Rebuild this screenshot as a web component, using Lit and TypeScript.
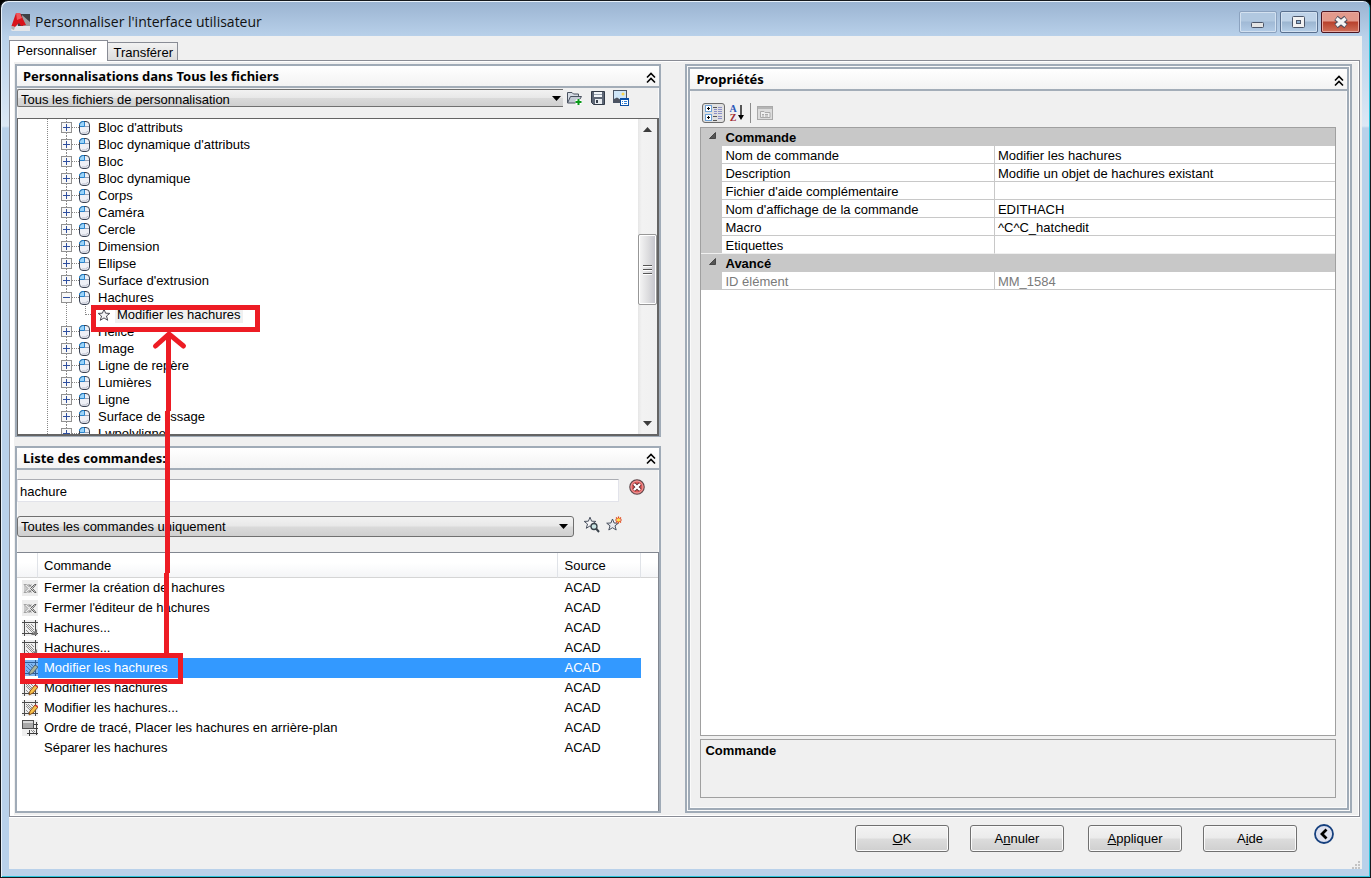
import { LitElement, html, css, svg, nothing } from "lit";
import { customElement, property } from "lit/decorators.js";

const icon = (w: number, h: number, body: unknown, cls = "") =>
  html`<svg class=${cls} width=${w} height=${h} viewBox="0 0 ${w} ${h}" aria-hidden="true">${body}</svg>`;

const mouseIcon = icon(12, 16, svg`
  <rect x="0.5" y="1.5" width="10" height="13" rx="3.500" fill="#eef0f6" stroke="#3c4454"/>
  <path d="M1 6.500V5Q1.500 2 5 2V6.500Z" fill="#9ad4fa"/>
  <path d="M5.500 2V6.500H10" stroke="#9aa2b4" fill="none"/>
  <path d="M5.500 2V6.500H1" stroke="#2a84cc" fill="none"/>
  <path d="M0.500 5Q0.500 1.500 5 1.500" stroke="#1684d8" fill="none"/>
  <path d="M3 13Q7 14 9 11" stroke="#b9bccb" fill="none"/>`);

const starPath = "M7 1.200L8.600 5.200L12.800 5.400L9.500 8L10.700 12.300L7 9.900L3.300 12.300L4.500 8L1.200 5.400L5.400 5.200Z";
const starIcon = icon(14, 14, svg`<path d=${starPath} fill="#f3f3f6" stroke="#4a4a55"/>`);

const closeHatch = icon(16, 16, svg`
  <rect width="16" height="16" fill="#ededed"/>
  <path d="M2 4.500H4.500L7.500 7L9.500 4.500M2 12.500H4.500L7.500 10L9.500 12.500M2 4.500L6 8.500L2 12.500" fill="#c9c9c9" stroke="#a2a2a2"/>
  <path d="M14 4.500H12.500L8.500 8.500L12.500 12.500H14M7 4.500L9 6.500M7 12.500L9 10.500M14 4.500L10.500 8.500L14 12.500" stroke="#606060" fill="none"/>`);

const hatchBase = svg`
  <rect width="16" height="16" fill="#efefef"/>
  <path d="M4 6L11 13M4 10L7 13M6 4L12 10M9 4L12 7M4 4L12 12" stroke="#8d8d8d" fill="none"/>
  <path d="M2.500 0V16M13.500 0V16M0 2.500H16M0 13.500H16" stroke="#4b4b4b" fill="none"/>`;
const hatchIcon = icon(16, 16, svg`${hatchBase}<path d="M15 9V15H9Z" fill="#777"/>`);
const hatchEdit = icon(16, 16, svg`${hatchBase}
  <path d="M7 15L8 11L13 5L16 7L11 13Z" fill="#f7c04a" stroke="#8a4f14"/>
  <path d="M13 5L16 7" stroke="#c33" stroke-width="1.500"/>`);
const hatchEditSel = icon(16, 16, svg`
  <rect width="16" height="16" fill="#7fb7f2"/>
  <path d="M4 6L11 13M4 10L7 13M6 4L12 10M9 4L12 7" stroke="#4a7cb4" fill="none"/>
  <path d="M2.500 0V16M13.500 0V16M0 2.500H16M0 13.500H16" stroke="#2c5e98" fill="none"/>
  <path d="M7 15L8 11L13 5L16 7L11 13Z" fill="#a8b49a" stroke="#46607a"/>`);
const orderIcon = icon(16, 16, svg`
  <rect width="16" height="16" fill="#efefef"/>
  <rect x="0.500" y="0.500" width="11" height="8" fill="#a8a8a8" stroke="#505050"/>
  <path d="M1 2H11" stroke="#d8d8d8" stroke-width="2"/>
  <path d="M14.500 2V15M12 4.500H16M5 13.500H16M7.500 10V16M12 8.500H16" stroke="#3d3d3d" fill="none"/>
  <path d="M9 10L12 13M11 10L13 12" stroke="#888"/>`);

const chevrons = icon(10, 12, svg`
  <path d="M1 5.500L5 1.500L9 5.500M1 10.500L5 6.500L9 10.500" fill="none" stroke="#000" stroke-width="1.600"/>`);

const openIcon = icon(17, 16, svg`
  <path d="M1.500 13V2.500H6L7.500 4H12.500V6" fill="#d5dbe3" stroke="#4a5260"/>
  <path d="M1.500 13L4.500 6.500H15.500L11.500 13Z" fill="#c3cad4" stroke="#4a5260"/>
  <path d="M12.500 9V15M9.500 12H15.500" stroke="#fff" stroke-width="4"/>
  <path d="M12.500 9V15M9.500 12H15.500" stroke="#0b9a1a" stroke-width="2"/>`);
const saveIcon = icon(16, 16, svg`
  <path d="M1.500 1.500H14.500V14.500H3.500L1.500 12.500Z" fill="#5d6675" stroke="#333b48"/>
  <rect x="4" y="2" width="8" height="5" fill="#f2f5f8"/><path d="M4 4.500H12" stroke="#9aa4b0"/>
  <rect x="5" y="9" width="7" height="5" fill="#e8ecf0"/><rect x="6" y="10" width="2" height="3" fill="#39414d"/>`);
const imageIcon = icon(16, 16, svg`
  <rect x="0.500" y="0.500" width="13" height="12" fill="#cfe6f8" stroke="#4a5566"/>
  <circle cx="10" cy="4" r="1.500" fill="#fbd54a"/>
  <path d="M1 12V9L4 7.500L8 10V12Z" fill="#4d5360"/>
  <rect x="7.500" y="8.500" width="8" height="7" fill="#fff" stroke="#0b4fa5"/>
  <path d="M7 9H16" stroke="#0b4fa5" stroke-width="2"/>
  <path d="M9 11.500H10M11 11.500H14M9 13.500H10M11 13.500H14" stroke="#2d7fd8"/>`);

const clearIcon = icon(16, 16, svg`
  <circle cx="8" cy="8" r="7.200" fill="#e05a5a" stroke="#5e4a4e" stroke-width="1.200"/>
  <circle cx="8" cy="8" r="6" fill="none" stroke="#f0a0a0"/>
  <path d="M5 5L11 11M11 5L5 11" stroke="#5e2a2e" stroke-width="4"/>
  <path d="M5 5L11 11M11 5L5 11" stroke="#fff" stroke-width="2.400"/>`);
const findStar = icon(17, 17, svg`
  <path d=${starPath} fill="#f6f6f8" stroke="#4a5260"/>
  <circle cx="11" cy="10.500" r="3" fill="#c9e4e4" stroke="#39424a" stroke-width="1.300"/>
  <path d="M13 12.500L16 16" stroke="#39424a" stroke-width="2"/>`);
const newStar = icon(17, 17, svg`
  <path d="M6.500 3L8.100 7L12.300 7.200L9 9.800L10.200 14L6.500 11.700L2.800 14L4 9.800L0.700 7.200L4.900 7Z" fill="#e8eaee" stroke="#4a5260"/>
  <path d="M12.500 0.500V7.500M9 4H16M10 1.500L15 6.500M15 1.500L10 6.500" stroke="#e0481c" stroke-width="1.200"/>
  <circle cx="12.500" cy="4" r="1.700" fill="#ffe04a"/>`);

const categoryIcon = icon(20, 18, svg`
  <rect x="1.500" y="1.500" width="6" height="6" fill="#fff" stroke="#6fa3d8"/>
  <rect x="1.500" y="10.500" width="6" height="6" fill="#fff" stroke="#6fa3d8"/>
  <path d="M3 4.500H6M4.500 3V6M3 13.500H6M4.500 12V15" stroke="#000"/>
  <path d="M9 3.500H13M9 12.500H13M9 16.500H13" stroke="#555"/>
  <path d="M10 5.500H13M10 7.500H13M10 9.500H13M14 3.500H18M14 5.500H18M14 7.500H18M14 9.500H18M14 12.500H18M14 14.500H18" stroke="#8b8fc8"/>`);
const sortArrow = icon(6, 16, svg`<path d="M3 0V13" stroke="#000" stroke-width="1.300"/><path d="M0 10H6L3 15Z" fill="#000"/>`);
const pagesIcon = icon(16, 16, svg`
  <rect x="0.500" y="1.500" width="15" height="13" fill="#dcdcdc" stroke="#a9a9a9"/>
  <path d="M1 3H15" stroke="#b5b5b5" stroke-width="2"/>
  <path d="M3.500 12.500V6.500H7L8 7.500H13V12.500Z" fill="#efefef" stroke="#aaa"/>
  <path d="M5 9.500H7M5 11H7M8 9.500H11M8 11H11" stroke="#aaa"/>`);
const expandedMark = icon(7, 7, svg`<path d="M6.500 0.500V6.500H0.500Z" fill="#555" stroke="#333" stroke-width="0.800"/>`);

const logo = icon(20, 20, svg`
  <rect x="7" y="2" width="12" height="12" fill="#3d4045"/>
  <path d="M11 3L19 10V14H12Z" fill="#9b9da1"/>
  <path d="M0 18L2 14H19V19H1Z" fill="#e3e6ea"/>
  <path d="M0.500 14L5 1H9L15 13L10 14L8 11L4 15Z" fill="#d8131b"/>
  <path d="M5 1L9 1L11 6L6 8Z" fill="#f0555a"/>
  <path d="M0.500 14L4 15L3 18L0.500 17Z" fill="#b0aeb2"/>`);

const plusBox = (open: boolean) => icon(11, 11, svg`
  <rect x="0.500" y="0.500" width="10" height="10" fill="#f8f8f8" stroke="#919191"/>
  <path d="M2 5.500H9" stroke="#2f4f9f"/>
  ${open ? nothing : svg`<path d="M5.500 2V9" stroke="#2f4f9f"/>`}`);

@customElement("panel-header")
export class PanelHeader extends LitElement {
  @property() label = "";
  static styles = css`
    :host { display: flex; align-items: center; justify-content: space-between; box-sizing: border-box; height: 22px; flex: none;
      padding: 0 2px 0 6px; background: linear-gradient(#fff, #f3f3f3); border-bottom: 2px solid #a3adb8;
      font: bold 13px/20px "Noto Sans", sans-serif; color: #000; }
    h2 { margin: 0; font: inherit; }
    button { display: flex; margin: 3px 1px 0 0; padding: 0; border: 0; background: none; }
  `;
  render() {
    return html`<h2>${this.label}</h2><button aria-label="Réduire">${chevrons}</button>`;
  }
}

const TREE = ["Bloc d'attributs", "Bloc dynamique d'attributs", "Bloc", "Bloc dynamique", "Corps", "Caméra",
  "Cercle", "Dimension", "Ellipse", "Surface d'extrusion", "Hachures", "Hélice", "Image", "Ligne de repère",
  "Lumières", "Ligne", "Surface de lissage", "Lwpolyligne"];

const COMMANDS: [unknown, string][] = [
  [closeHatch, "Fermer la création de hachures"],
  [closeHatch, "Fermer l'éditeur de hachures"],
  [hatchIcon, "Hachures..."],
  [hatchIcon, "Hachures..."],
  [hatchEditSel, "Modifier les hachures"],
  [hatchEdit, "Modifier les hachures"],
  [hatchEdit, "Modifier les hachures..."],
  [orderIcon, "Ordre de tracé, Placer les hachures en arrière-plan"],
  [nothing, "Séparer les hachures"],
];
const SELECTED = 4;

const PROPS: [string, string][] = [
  ["Nom de commande", "Modifier les hachures"],
  ["Description", "Modifie un objet de hachures existant"],
  ["Fichier d'aide complémentaire", ""],
  ["Nom d'affichage de la commande", "EDITHACH"],
  ["Macro", "^C^C_hatchedit"],
  ["Etiquettes", ""],
];

@customElement("app-root")
export class AppRoot extends LitElement {
  static styles = css`
    :host { display: block; position: relative; height: 100vh; min-height: 600px; color: #000; background: #000;
      font: 13px/16px "Liberation Sans", Arial, sans-serif; }
    * { box-sizing: border-box; }
    svg { display: block; flex: none; }
    button, select, input { font: inherit; color: inherit; margin: 0; }
    .window { height: 100%; display: flex; flex-direction: column; padding: 0 8px 8px; border: 1px solid #15181d;
      border-radius: 8px 8px 0 0; background: linear-gradient(#9ab3d1, #b9d1ea 36px, #dce8f5 125px, #b9d1ea 127px);
      box-shadow: inset 1px 1px 0 #e8f1fa, inset -1px -1px 0 #2cc4dc; }
    .titlebar { display: flex; align-items: center; height: 35px; flex: none; padding: 6px 2px 0 2px; gap: 4px; }
    .titlebar h1 { flex: 1; margin: 0; font: 14px/20px "Open Sans", "Noto Sans", sans-serif; color: #111; }
    .controls { display: flex; gap: 3px; }
    .controls button { width: 38px; height: 22px; padding: 0; display: flex; align-items: center; justify-content: center;
      border: 1px solid #59708f; border-radius: 2px; box-shadow: inset 0 0 0 1px #d3e1f0;
      background: linear-gradient(#bfd3e8 45%, #9bb5d0 50%, #b6cfe8); }
    .controls .min { border-color: #8ba2bf; background: linear-gradient(#b1c8e0 45%, #a0b9d5 50%, #b3cce7); }
    .controls .close { width: 39px; border-color: #4c1520; box-shadow: inset 0 0 0 1px #e8a9a0;
      background: linear-gradient(#e39a8c 45%, #b8412c 50%, #d0705a); }
    .client { flex: 1; min-height: 0; display: flex; flex-direction: column; background: #f0f0f0; padding: 4px 2px 0 0; }
    .tabs { display: flex; align-items: flex-end; height: 20px; flex: none; }
    .tabs button { height: 18px; padding: 0 4px 0 6px; border: 1px solid #898c95; border-bottom: 0; border-left: 0;
      background: linear-gradient(#f2f2f2, #dcdcdc); line-height: 19px; }
    .tabs .on { height: 21px; margin-bottom: -1px; padding: 0 10px 0 7px; background: #fff; border-left: 1px solid #898c95;
      position: relative; line-height: 18px; }
    .page { flex: 1; min-height: 0; display: grid; grid-template-columns: minmax(0, 646fr) minmax(0, 666fr);
      gap: 24px; padding: 3px 7px 3px 5px; border: 1px solid #898c95; background: #f0f0f0;
      box-shadow: inset 4px 0 0 #fff, inset -1px -1px 0 #fff, inset 0 1px 0 #fff, 0 1px 0 #fff; }
    .left { display: flex; flex-direction: column; gap: 9px; min-height: 0; }
    .panel { display: flex; flex-direction: column; min-height: 0; border: 2px solid #a0abb7; background: #f0f0f0;
      box-shadow: inset 0 0 0 1px #fafafa; }
    .files { flex: 373 1 0; }
    .commands { flex: 367 1 0; }
    .filebar { display: flex; height: 30px; flex: none; gap: 7px; padding-top: 1px; }
    .filebar .icons { display: flex; width: 93px; gap: 7px; padding-top: 1px; margin-left: -4px; }
    .filebar select { flex: 1; }
    .filebar .combo { height: 18px; padding-top: 2px; border-right: 0; border-radius: 2px 0 0 2px; }
    .combo { flex: 1; display: block; min-width: 0; height: 21px; padding: 2px 20px 0 3px; appearance: none; border: 1px solid #707070;
      border-radius: 3px; line-height: 16px;
      background: url("data:image/svg+xml,%3Csvg xmlns='http://www.w3.org/2000/svg' width='9' height='5'%3E%3Cpath d='M0 0H9L4.500 5Z'/%3E%3C/svg%3E") no-repeat right 5px center,
        linear-gradient(#f2f2f2, #e8e8e8 48%, #dadada 52%, #cfcfcf); }
    .filebar .combo { background-position: right 2px top 6px, 0 0; }
    .icons button, .search button { display: flex; padding: 0; border: 0; background: none; }
    .treebox { flex: 1; min-height: 0; display: flex; overflow: hidden; background: #fff; border: 1px solid #646464;
      border-right-width: 2px; border-bottom-width: 2px; margin-bottom: -1px; }
    .tree { flex: 1; overflow: hidden; list-style: none; margin: 0; padding: 0 0 0 29px; }
    .tree ul { list-style: none; margin: 0; }
    .roots { border-left: 1px dotted #888; padding-left: 13px; }
    .branch { padding: 0; }
    .node { display: flex; align-items: center; height: 17px; white-space: nowrap; }
    .node .dots { width: 7px; border-top: 1px dotted #888; }
    .node .name { padding: 1px 3px 0 7px; }
    .trunk { background: linear-gradient(#888 50%, transparent 50%) 5px 0 / 1px 2px repeat-y; }
    .leaf { padding-left: 24px; }
    .leaf .elbow { width: 8px; height: 9px; border-left: 1px dotted #888; border-bottom: 1px dotted #888;
      align-self: flex-start; margin-right: 4px; }
    .node.leaf .name { background: #f0f0f0; padding: 0 2px; margin-left: 4px; }
    .scroll { display: flex; flex-direction: column; align-items: center; width: 19px; padding: 8px 0;
      background: linear-gradient(90deg, #e6e6e6, #f2f2f2 20%, #f0f0f0); }
    .before { flex: 99 1 0; }
    .after { flex: 112 1 0; }
    .thumb { width: 19px; height: 71px; display: flex; align-items: center; justify-content: center; border: 1px solid #979797;
      border-radius: 2px; box-shadow: inset 0 0 0 1px #fff; background: linear-gradient(90deg, #f6f6f6, #dcdcde 55%, #c4c4cc); }
    .search { display: flex; gap: 10px; flex: none; }
    .query { padding-top: 9px; height: 46px; }
    .query input { height: 23px; flex: 1; min-width: 0; padding: 4px 2px 2px; border: 1px solid #e2e3ea; border-top-color: #abadb3;
      background: #fff; }
    .query button { height: 16px; margin-right: 14px; }
    .scope { height: 36px; gap: 7px; }
    .scope .icons { display: flex; gap: 6px; padding-left: 2px; width: 78px; }
    .listbox { flex: 1; min-height: 0; overflow: hidden; background: #fff; border: 1px solid #828790; border-width: 1px 1px 0 0; }
    table { border-collapse: separate; border-spacing: 0; table-layout: fixed; width: 100%; }
    th, td { padding: 0; text-align: left; font-weight: normal; white-space: nowrap; overflow: hidden; }
    .list th { height: 25px; padding: 2px 0 0 6px; border-bottom: 1px solid #d5d5d5; border-right: 1px solid #e0e3e8;
      background: linear-gradient(#fff 40%, #f4f5f7); background-clip: padding-box; }
    .list th:last-child { border-right: 0; }
    .list td { height: 20px; padding-left: 6px; }
    .list td:first-child { padding-left: 5px; }
    .list tr.sel td:nth-child(2), .list tr.sel td:nth-child(3) { background: #3399ff; color: #fff; }
    .c-icon { width: 21px; }
    .c-src { width: 83px; }
    .c-end { width: 17px; }
    .outer { display: flex; min-height: 0; padding: 1px; border: 2px solid #a0abb7; background: #fafafa; }
    .props { flex: 1; min-width: 0; }
    .inside { flex: 1; min-height: 0; display: flex; flex-direction: column; padding: 11px 11px 10px 10px; }
    .tools { display: flex; align-items: center; height: 22px; flex: none; gap: 4px; padding-left: 2px; margin-bottom: 3px; }
    .tools button { display: flex; align-items: center; padding: 0; border: 0; background: none; }
    .tools .pressed { width: 23px; height: 20px; border: 1px solid #6c6c6c; border-radius: 3px; background: #e0e0e0; justify-content: center; }
    .tools .az { font: bold 10px/9px "Liberation Serif", serif; gap: 1px; }
    .az .letters { display: grid; }
    .az .a { color: #2b56b8; }
    .az .z { color: #a02a32; }
    .tools .sep { width: 1px; height: 20px; background: #8c8c8c; margin: 0 2px; }
    .grid { flex: 1; min-height: 0; border: 1px solid #a0a0a0; background: #fff; overflow: hidden; }
    .grid th, .grid td { height: 18px; line-height: 15px; padding: 2px 0 0 3px; border-bottom: 1px solid #c8c8c8; }
    .grid .cat { font-weight: bold; background: #c8c8c8; }
    .grid .gutter { background: #c8c8c8; padding: 0 0 4px 8px; border-bottom: 0; }
    .grid .key { border-right: 1px solid #c8c8c8; }
    .grid .last > *, .grid .last > .gutter { border-bottom: 1px solid #f0f0f0; }
    .grid .muted { color: #7a7a7a; }
    .c-gutter { width: 21px; }
    .c-key { width: 43%; }
    .help { height: 59px; flex: none; margin-top: 3px; padding: 3px 4px; border: 1px solid #a0a0a0; font-weight: bold; }
    .footer { display: flex; justify-content: flex-end; height: 52px; flex: none; padding: 8px 26px 0 0; gap: 21px; }
    .footer .push { width: 94px; height: 27px; border: 1px solid #707070; border-radius: 3px; padding: 0;
      box-shadow: inset 0 0 0 1px #fafafa; background: linear-gradient(#f3f3f3, #ebebeb 48%, #dcdcdc 52%, #cfcfcf); }
    .footer .apply { margin-left: 3px; }
    .footer .round { display: flex; height: 20px; padding: 0; border: 0; background: none; margin: -1px 0 0 -4px; }
    .grip { position: absolute; right: 10px; bottom: 9px; }
    .marks { position: absolute; left: 0; top: 0; pointer-events: none; }
  `;

  private node(name: string) {
    const open = name === "Hachures";
    return html`<li class="trunk">
      <div class="node">${plusBox(open)}<span class="dots"></span>${mouseIcon}<span class="name">${name}</span></div>
      ${open ? html`<div class="node leaf"><span class="elbow"></span>${starIcon}<span class="name">Modifier les hachures</span></div>` : nothing}
    </li>`;
  }

  private prop(row: [string, string], last = false, muted = false) {
    return html`<tr class="${last ? "last" : ""} ${muted ? "muted" : ""}"><td class="gutter"></td><th class="key" scope="row">${row[0]}</th><td>${row[1]}</td></tr>`;
  }

  render() {
    return html`
      <div class="window">
        <header class="titlebar">
          ${logo}
          <h1>Personnaliser l'interface utilisateur</h1>
          <div class="controls">
            <button class="min" aria-label="Réduire">${icon(14, 14, svg`<rect x="0.500" y="7.500" width="12" height="5" rx="1" fill="#e4e4e4" stroke="#4b5568"/>`)}</button>
            <button aria-label="Agrandir">${icon(14, 14, svg`<rect x="0.500" y="1.500" width="12" height="11" rx="1" fill="#f2f2f2" stroke="#4b5568"/><rect x="4.500" y="5.500" width="4" height="3" fill="#8fb0d0" stroke="#4b5568"/>`)}</button>
            <button class="close" aria-label="Fermer">${icon(14, 14, svg`<path d="M2 3L12 11M12 3L2 11" stroke="#4d4d5c" stroke-width="5.500"/><path d="M2.500 3.400L11.500 10.600M11.500 3.400L2.500 10.600" stroke="#f4f4f4" stroke-width="3.500"/>`)}</button>
          </div>
        </header>
        <main class="client">
          <div class="tabs" role="tablist">
            <button class="on" role="tab" aria-selected="true">Personnaliser</button>
            <button role="tab" aria-selected="false">Transférer</button>
          </div>
          <div class="page">
            <div class="left">
              <section class="panel files">
                <panel-header label="Personnalisations dans Tous les fichiers"></panel-header>
                <div class="filebar">
                  <select class="combo" aria-label="Fichiers de personnalisation"><option>Tous les fichiers de personnalisation</option></select>
                  <div class="icons">
                    <button aria-label="Ouvrir">${openIcon}</button>
                    <button aria-label="Enregistrer">${saveIcon}</button>
                    <button aria-label="Images">${imageIcon}</button>
                  </div>
                </div>
                <div class="treebox">
                  <ul class="tree"><li class="roots"><ul class="branch">${TREE.map((n) => this.node(n))}</ul></li></ul>
                  <div class="scroll">
                    ${icon(9, 5, svg`<path d="M0 5L4.500 0L9 5Z" fill="#3c3c3c"/>`)}
                    <div class="before"></div>
                    <div class="thumb">${icon(9, 11, svg`<path d="M0 1.500H9M0 5.500H9M0 9.500H9" stroke="#555"/><path d="M0 2.500H9M0 6.500H9M0 10.500H9" stroke="#fff"/>`)}</div>
                    <div class="after"></div>
                    ${icon(9, 5, svg`<path d="M0 0L4.500 5L9 0Z" fill="#3c3c3c"/>`)}
                  </div>
                </div>
              </section>
              <section class="panel commands">
                <panel-header label="Liste des commandes:"></panel-header>
                <div class="search query">
                  <input type="text" aria-label="Rechercher une commande" .value=${"hachure"} />
                  <button aria-label="Effacer">${clearIcon}</button>
                </div>
                <div class="search scope">
                  <select class="combo" aria-label="Catégorie de commandes"><option>Toutes les commandes uniquement</option></select>
                  <div class="icons">
                    <button aria-label="Rechercher">${findStar}</button>
                    <button aria-label="Nouvelle commande">${newStar}</button>
                  </div>
                </div>
                <div class="listbox">
                  <table class="list">
                    <colgroup><col class="c-icon" /><col /><col class="c-src" /><col class="c-end" /></colgroup>
                    <thead><tr><th></th><th>Commande</th><th>Source</th><th></th></tr></thead>
                    <tbody>
                      ${COMMANDS.map(([ic, name], i) => html`<tr class=${i === SELECTED ? "sel" : ""}><td>${ic}</td><td>${name}</td><td>ACAD</td><td></td></tr>`)}
                    </tbody>
                  </table>
                </div>
              </section>
            </div>
            <div class="outer">
              <section class="panel props">
                <panel-header label="Propriétés"></panel-header>
                <div class="inside">
                  <div class="tools">
                    <button class="pressed" aria-label="Par catégorie">${categoryIcon}</button>
                    <button class="az" aria-label="Alphabétique"><span class="letters"><span class="a">A</span><span class="z">Z</span></span>${sortArrow}</button>
                    <span class="sep"></span>
                    <button aria-label="Pages de propriétés" disabled>${pagesIcon}</button>
                  </div>
                  <div class="grid">
                    <table>
                      <colgroup><col class="c-gutter" /><col class="c-key" /><col /></colgroup>
                      <tbody>
                        <tr><td class="gutter">${expandedMark}</td><th class="cat" colspan="2">Commande</th></tr>
                        ${PROPS.map((p, i) => this.prop(p, i === PROPS.length - 1))}
                        <tr><td class="gutter">${expandedMark}</td><th class="cat" colspan="2">Avancé</th></tr>
                        ${this.prop(["ID élément", "MM_1584"], false, true)}
                      </tbody>
                    </table>
                  </div>
                  <div class="help">Commande</div>
                </div>
              </section>
            </div>
          </div>
          <footer class="footer">
            <button class="push"><u>O</u>K</button>
            <button class="push">A<u>n</u>nuler</button>
            <button class="push apply"><u>A</u>ppliquer</button>
            <button class="push">A<u>i</u>de</button>
            <button class="round" aria-label="Moins d'options">${icon(20, 20, svg`
              <circle cx="10" cy="10" r="9" fill="#dfe2f0" stroke="#16407e" stroke-width="1.800"/>
              <path d="M12.500 5.500L8 10L12.500 14.500" fill="none" stroke="#000" stroke-width="2.800"/>`)}</button>
          </footer>
        </main>
      </div>
      <svg class="grip" width="9" height="9" aria-hidden="true"><path d="M6 1h2v2h-2zM3 4h2v2h-2zM6 4h2v2h-2zM0 7h2v2h-2zM3 7h2v2h-2zM6 7h2v2h-2z" fill="#c4c4c4"/></svg>
      <svg class="marks" width="300" height="700" fill="none" stroke="#ed1c24" stroke-width="5" aria-hidden="true">
        <rect x="93.500" y="307.500" width="164" height="22"/>
        <rect x="22.500" y="655.500" width="158" height="26"/>
        <path d="M168.500 335V411M167.500 411V573M166.500 573V655"/>
        <path d="M155.500 346L169 334L183.500 346" stroke-linecap="round"/>
      </svg>`;
  }
}
